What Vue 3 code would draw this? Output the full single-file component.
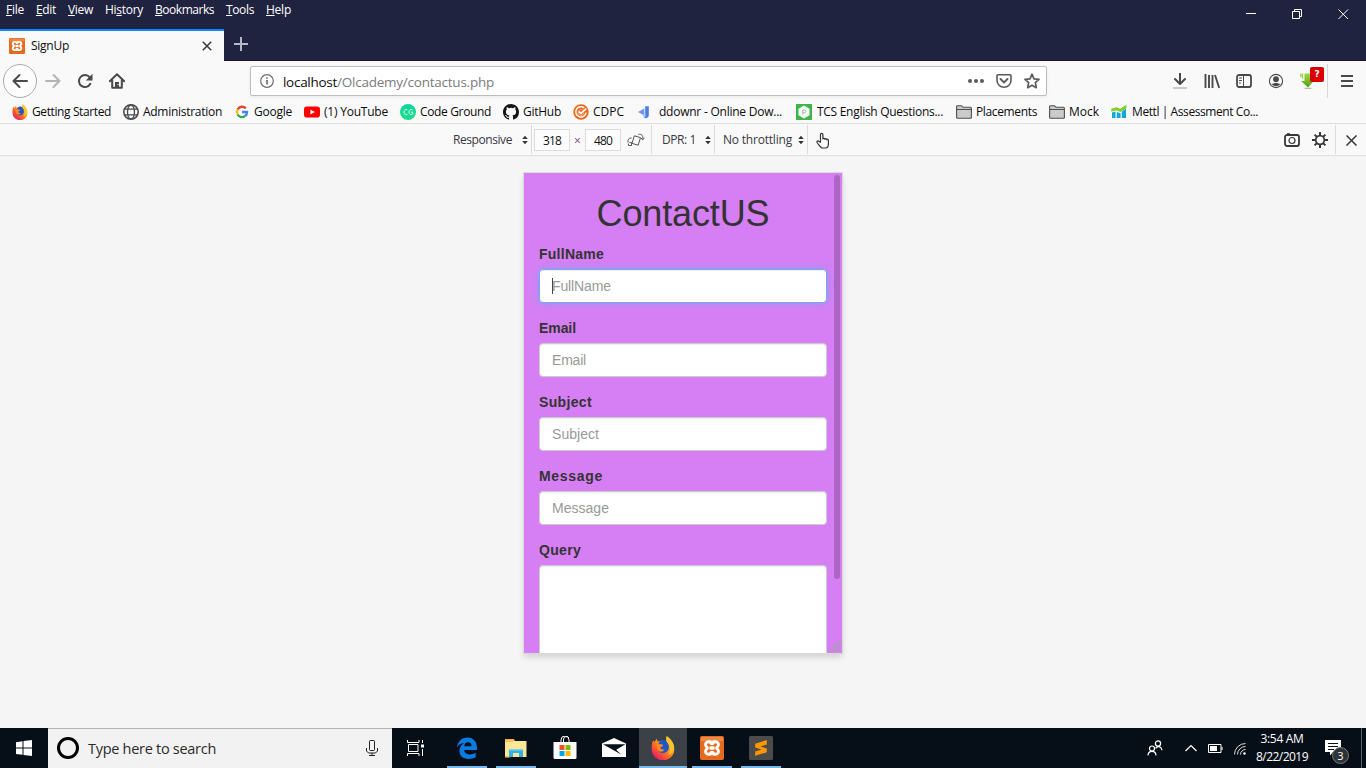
<script setup>
// Tightens or widens letter spacing so that a label takes the given width.
const vFit = {
  mounted(el, { value }) {
    const natural = el.getBoundingClientRect().width
    const n = el.textContent.length
    el.style.letterSpacing = (value - natural) / n + 'px'
  },
}

const menus = [
  ['', 'F', 'ile', 18], ['', 'E', 'dit', 20], ['', 'V', 'iew', 25],
  ['Hi', 's', 'tory', 38], ['', 'B', 'ookmarks', 59], ['', 'T', 'ools', 28], ['', 'H', 'elp', 25],
]
const bookmarks = [
  ['firefox', 'Getting Started', 79], ['globe', 'Administration', 79], ['google', 'Google', 38],
  ['youtube', '(1) YouTube', 64], ['code', 'Code Ground', 71], ['github', 'GitHub', 38],
  ['cdpc', 'CDPC', 31], ['ddownr', 'ddownr - Online Dow...', 123], ['tcs', 'TCS English Questions...', 126],
  ['folder', 'Placements', 61], ['folder', 'Mock', 30], ['mettl', 'Mettl | Assessment Co...', 126],
]
const fields = [['FullName', 65, 59], ['Email', 37, 34], ['Subject', 53, 47], ['Message', 64, 57]]
const apps = ['edge', 'explorer', 'store', 'mail', 'firefox', 'xampp', 'sublime']
const running = ['edge', 'explorer', 'firefox', 'xampp', 'sublime']
</script>

<template>
  <div class="screen">
    <svg class="defs" width="0" height="0" aria-hidden="true">
      <defs>
        <linearGradient id="ffg" x1="1" y1="0" x2="0.2" y2="1">
          <stop offset="0" stop-color="#fff23a" /><stop offset=".4" stop-color="#ffb01c" />
          <stop offset=".7" stop-color="#ff5a28" /><stop offset="1" stop-color="#e0127c" />
        </linearGradient>
        <linearGradient id="cg" x1="0" y1="0" x2="0" y2="1">
          <stop offset="0" stop-color="#12d3a3" /><stop offset="1" stop-color="#1fdd8a" />
        </linearGradient>
        <linearGradient id="arr" x1="0" y1="0" x2="0" y2="1">
          <stop offset="0" stop-color="#a4d842" /><stop offset="1" stop-color="#4f9d0c" />
        </linearGradient>
      </defs>
      <symbol id="firefox" viewBox="0 0 16 16">
        <path fill="url(#ffg)" d="M1.500 2.600 2 4.100 4 1.800 4.300 3.600 7 3.200 10.200 3.600 10.500.2C13.200 2 15.800 5 15.500 9A7.500 7.200 0 0 1 .5 9C.3 6 .8 4 1.500 2.600Z" />
        <path fill="#2156c4" d="M6.500 3C9.300 1.600 12.300 4 11.900 8c-.4 3.200-4.600 4.500-7 2.200 1.500.4 3-.4 3.400-1.300-1.600.1-2.500-.5-2.500-1.400L8 6C7.500 5.400 5.800 5.600 5 5.500 5.200 4.400 5.700 3.500 6.500 3Z" />
        <path fill="#ffc42b" d="M10.500.2C13.200 2 15.300 5 14.800 8.700c-.5 2.300-2 3.600-3.300 4.100 1.500-2 2-6-.6-8.500C10 3.300 9.900 1.500 10.500.2Z" />
        <path fill="#ff8a24" d="M3.800 5.500 7.300 5.900 8.200 6.300 6.200 7.800C6 9 7.400 9.500 9 9c-1 1.900-3.500 1.900-4.700.2Z" />
      </symbol>
      <symbol id="globe" viewBox="0 0 16 16">
        <g fill="none" stroke="#4c4c4e" stroke-width="1.300"><circle cx="8" cy="8" r="7.200" stroke-width="1.600" /><ellipse cx="8" cy="8" rx="3.500" ry="7" /><path d="M1.600 5.200h12.800M1.600 10.800h12.800" /></g>
      </symbol>
      <symbol id="google" viewBox="0 0 16 16">
        <circle cx="8" cy="8" r="8" fill="#fff" />
        <g fill="none" stroke-width="2.400"><path stroke="#ea4335" d="M3.600 5.500A5 5 0 0 1 11.800 4.400" /><path stroke="#fbbc05" d="M3.600 5.500a5 5 0 0 0 0 5" /><path stroke="#34a853" d="M3.600 10.500a5 5 0 0 0 7.700 1.400" /><path stroke="#4285f4" d="M8 8h5a5 5 0 0 1-1.700 3.900" /></g>
      </symbol>
      <symbol id="youtube" viewBox="0 0 16 16"><rect x="0" y="2.400" width="16" height="11.200" rx="2.800" fill="#f00" /><path fill="#fff" d="M6.400 5.400v5.200L10.800 8Z" /></symbol>
      <symbol id="code" viewBox="0 0 16 16"><circle cx="8" cy="8" r="8" fill="url(#cg)" /><path d="M7.500 5.800a2.400 2.600 0 1 0 0 4.500M12.600 5.800a2.400 2.600 0 1 0 .2 4.300V8.200h-1.800" fill="none" stroke="#c6ffe9" /></symbol>
      <symbol id="github" viewBox="0 0 16 16"><path fill="#171515" d="M8 0C3.580 0 0 3.580 0 8c0 3.540 2.290 6.530 5.470 7.590.4.070.55-.17.55-.38v-1.490c-2.010.37-2.530-.49-2.690-.94-.09-.23-.48-.94-.82-1.130-.28-.15-.68-.52-.01-.53.63-.01 1.080.58 1.230.82.72 1.210 1.870.87 2.330.66.07-.52.28-.87.51-1.070-1.780-.2-3.640-.89-3.640-3.950 0-.87.31-1.590.82-2.150-.08-.2-.36-1.020.08-2.120 0 0 .67-.21 2.200.82a7.400 7.400 0 0 1 4 0c1.530-1.040 2.200-.82 2.200-.82.44 1.100.16 1.920.08 2.120.51.56.82 1.270.82 2.150 0 3.070-1.870 3.750-3.650 3.950.29.25.54.73.54 1.480v2.200c0 .21.15.46.55.38A8 8 0 0 0 16 8c0-4.420-3.580-8-8-8Z" /></symbol>
      <symbol id="cdpc" viewBox="0 0 16 16"><circle cx="8" cy="8" r="7.700" fill="#ef6418" /><g fill="none" stroke="#fff"><path d="M11.200 3.800A5.200 5.200 0 1 0 13.100 8.600" stroke-width="1.500" /><path d="M5.800 7.500 8 9.400 13.300 4.600" stroke-width="1.700" /><path d="M9.600 5.900A2.900 2.900 0 1 0 10.800 9" stroke-width=".7" opacity=".7" /></g></symbol>
      <symbol id="ddownr" viewBox="0 0 16 16"><path fill="#527bea" d="M9.200 2.200h3.600v9.200a3 3 0 0 1-5.500 1.400L9.200 12Z" /><path fill="#6e94f4" d="M8.300 4.600v7L2 8Z" /><path fill="#a9c1fa" d="m6 10 4 2-1.500 1.600Z" /></symbol>
      <symbol id="tcs" viewBox="0 0 16 16"><path fill="#3db54a" d="M0 0h16v16H0Z" /><path fill="#fff" d="m8 1.600 5.500 3.200v6.400L8 14.400l-5.500-3.200V4.800Z" /><path fill="none" stroke="#7dca86" d="M6.800 10.500V6h1.600a1.400 1.400 0 0 1 0 2.800H6.800" /></symbol>
      <symbol id="folder" viewBox="0 0 16 16"><path d="M.6 13.400V2.600a.9.900 0 0 1 .9-.9h4l1.500 1.600h7.500a.9.900 0 0 1 .9.900v9.200a.9.900 0 0 1-.9.900h-13a.9.900 0 0 1-.9-.9Z" fill="#cbcbcb" stroke="#4e4e50" stroke-width="1.100" /><path d="M1 5.500h14" stroke="#4e4e50" /></symbol>
      <symbol id="mettl" viewBox="0 0 16 16"><path fill="#13a7d8" d="M1 8.600 4.500 7.500V14H1Zm4.800-.6 3.800 1.200V14H5.800Zm5-.4L15 4.500V14h-4.200Z" /><path fill="#84cc2c" d="M.3 4.800 5.400 3.200l3.800 1.500L15.400.8v3.500L9.400 7.900 5.200 6.200.3 7.800Z" /></symbol>
      <symbol id="xampp" viewBox="0 0 24 24"><rect width="24" height="24" rx="2" fill="#e56a1c" /><path d="M1 1h22v4H1Z" fill="#f49c60" opacity=".6" /><g fill="none" stroke="#fff" stroke-width="2.900" stroke-linejoin="round"><path d="M8.200 5.800h2.300c.3 2.600 2.700 2.600 3 0h2.300a2.700 2.700 0 0 1 2.600 3.300c-.4 1.700-1.800 2-1.800 2.900s1.400 1.200 1.800 2.900a2.700 2.700 0 0 1-2.600 3.300h-2.300c-.3-2.600-2.700-2.600-3 0H8.200a2.700 2.700 0 0 1-2.600-3.300C6 13.200 7.400 12.900 7.400 12S6 10.800 5.600 9.100a2.700 2.700 0 0 1 2.600-3.300Z" /><path d="M9.500 12h5" stroke-width="3.400" /></g></symbol>
      <symbol id="edge" viewBox="0 0 24 24"><path fill="#0a7be0" d="M2 11.400C2.700 5.600 6.700 1.500 12.200 1.500 18.500 1.500 22 6 22 12v2.100H9.100c.2 3 2.400 4.300 5.400 4.300 2.400 0 4.500-.6 6.200-1.700v4.500c-2 1.100-4.500 1.700-7.300 1.700-5.400 0-9-3.200-9-8.200 0-3.500 1.900-6.200 4.900-7.500C5.600 7.300 3.500 8.700 2 11.400Zm7.300-1.100h7.200c.2-2.400-1.200-4-3.500-4s-3.500 1.500-3.700 4Z" /></symbol>
      <symbol id="explorer" viewBox="0 0 24 24"><path fill="#e9b44b" d="M1 3h9l1 2H1Z" /><path fill="#ffe695" d="M1 5h21.500v16H1Z" /><path fill="#f5c752" d="M1 4h8v2H1ZM1 20h5v1.500H1Z" /><path fill="#31b0e7" d="M5 13h14v8h-4v-4H9v4H5Z" /><path fill="#7cd2f4" d="M5 13h14v1.500H5Z" /></symbol>
      <symbol id="store" viewBox="0 0 24 24"><path fill="#fff" d="M.5 6h23v15.500a1.500 1.500 0 0 1-1.500 1.500H2A1.500 1.500 0 0 1 .5 21.500Z" /><path d="M8 7V4a4 4 0 0 1 8 0v3M10.500 6V3a3 3 0 0 1 5.500-1" fill="none" stroke="#fff" /><path fill="#f25022" d="M6.500 9h5v5h-5Z" /><path fill="#7fba00" d="M12.500 9h5v5h-5Z" /><path fill="#00a4ef" d="M6.500 15h5v5h-5Z" /><path fill="#ffb900" d="M12.500 15h5v5h-5Z" /></symbol>
      <symbol id="mail" viewBox="0 0 24 24"><path fill="#fff" d="M0 7.500 12 2l12 5.500V21H0Z" /><path fill="#07101a" d="M1 8.300h22.500l-9.300 5.500 5 4.700L1 8.300Z" /></symbol>
      <symbol id="sublime" viewBox="0 0 24 24"><rect width="24" height="24" rx="1.500" fill="#4b4b4b" /><path fill="#ff9800" d="M17.800 4v4.400l-6.300 2 6.300 2v3.800L6.200 19.800v-4.300l6.300-2-6.300-2V7.700Z" /></symbol>
      <symbol id="updown" viewBox="0 0 6 10"><path fill="#333" d="M3 .8 5.800 4H.2ZM3 9.200.2 6h5.600Z" /></symbol>
    </svg>

    <header class="titlebar">
      <div class="toprow">
        <nav class="menus">
          <span v-for="m in menus" :key="m[1]" v-fit="m[3]" class="t">{{ m[0] }}<u>{{ m[1] }}</u>{{ m[2] }}</span>
        </nav>
        <svg class="wincontrols" width="138" height="29" viewBox="0 0 138 29" fill="none" stroke="#fff"><path d="M18 13.500h10M64.500 11.500h7v7h-7ZM66.500 11.500v-2h7v7h-2M110.500 9.500l9.500 9.500m0-9.500-9.500 9.500" /></svg>
      </div>
      <div class="tabs">
        <div class="tab">
          <svg width="16" height="16"><use href="#xampp" /></svg>
          <span v-fit="38" class="t">SignUp</span>
          <svg class="close" width="10" height="10" viewBox="0 0 10 10"><path d="m.8.8 8.400 8.400m0-8.400L.8 9.200" stroke="#3c3c3e" stroke-width="1.600" /></svg>
        </div>
        <svg class="plus" width="14" height="14" viewBox="0 0 14 14"><path d="M7 0v14M0 7h14" stroke="#b7b8c6" stroke-width="2" /></svg>
      </div>
    </header>

    <div class="toolbar">
      <div class="navbtns">
        <div class="back"><svg width="16" height="16" viewBox="0 0 16 16"><path d="M15 8H1.500M7.500 2l-6 6 6 6" class="s2" /></svg></div>
        <svg width="16" height="16" viewBox="0 0 16 16"><path d="M1 8h13.500M8.500 2l6 6-6 6" class="s2 dim" /></svg>
        <svg width="16" height="16" viewBox="0 0 16 16"><path d="M12.700 4.300A6 6 0 1 0 13.300 10.800" class="s2" /><path d="M15.500.8v6.700H8.800Z" fill="#4a4a4c" /></svg>
        <svg width="16" height="16" viewBox="0 0 16 16"><path d="m.8 8.200 7.200-7 7.200 7M3.200 7.500v7.300h9.600V7.500" class="s2" /><path d="M6 9h4v6H6Z" fill="#4a4a4c" /><path d="M8.500 11.500h1" stroke="#fff" /></svg>
      </div>
      <div class="urlbar">
        <svg width="14" height="14" viewBox="0 0 14 14"><circle cx="7" cy="7" r="6.300" fill="none" stroke="#6e6e70" stroke-width="1.200" /><path d="M7 6v4.500M7 3.200v1.600" stroke="#6e6e70" stroke-width="1.700" /></svg>
        <div class="url"><span v-fit="54" class="t">localhost</span><span v-fit="157" class="t path">/Olcademy/contactus.php</span></div>
        <div class="urlicons">
          <svg width="18" height="16" viewBox="0 0 18 16" fill="#5b5b5d"><circle cx="3" cy="8" r="2" /><circle cx="9" cy="8" r="2" /><circle cx="15" cy="8" r="2" /></svg>
          <svg width="16" height="16" viewBox="0 0 16 16"><path d="M1 2.800a1 1 0 0 1 1-1h12a1 1 0 0 1 1 1v4.500a7 7 0 0 1-14 0Z" fill="none" stroke="#5b5b5d" stroke-width="1.600" /><path d="m4.500 6 3.500 3.500L11.500 6" fill="none" stroke="#5b5b5d" stroke-width="1.900" stroke-linecap="round" /></svg>
          <svg width="16" height="16" viewBox="0 0 16 16"><path d="m8 1.200 2 4.600 5 .5-3.700 3.400 1 5L8 12.200l-4.300 2.500 1-5L1 6.300l5-.5Z" fill="none" stroke="#5b5b5d" stroke-width="1.700" stroke-linejoin="round" /></svg>
        </div>
      </div>
      <div class="actions">
        <svg viewBox="0 0 16 16"><path d="M8 0v10.500M3 6l5 5 5-5" class="s2" /><path d="M1 15h14" stroke="#c4c4c6" stroke-width="1.800" /></svg>
        <svg viewBox="0 0 16 16"><path d="M1.500 1v14M5 2v13M8.500 2v13M11 2l4.200 13" stroke="#4a4a4c" stroke-width="1.900" fill="none" /></svg>
        <svg viewBox="0 0 16 16"><rect x="1" y="2" width="14" height="12" rx="2" fill="none" stroke="#4a4a4c" stroke-width="1.800" /><path d="M7.500 2v12M3 5h3M3 7.500h3M3 10h2" stroke="#4a4a4c" /></svg>
        <svg viewBox="0 0 16 16"><circle cx="8" cy="8" r="6.600" fill="none" stroke="#4a4a4c" stroke-width="1.100" /><circle cx="8" cy="6.200" r="2.900" fill="#4a4a4c" /><path d="M3.500 10.700c2 .7 2.500-1 4.500-1s2.500 1.700 4.500 1c-1.500 3.300-7.500 3.300-9 0Z" fill="#4a4a4c" /></svg>
        <div class="dl">
          <svg viewBox="0 0 16 16"><path fill="url(#arr)" d="M4.500.5h7v6H15L8 14.500 1 8h3.500Z" /><path d="M2.500.5v5M.8.500V4" stroke="#8dce36" stroke-width="1.200" /><path d="M4.500 15.300h7" stroke="#aaa" /></svg>
          <b class="badge">?</b>
        </div>
      </div>
      <div class="burger"><svg width="12" height="14" viewBox="0 0 12 14"><path d="M0 2h12M0 7h12M0 12h12" stroke="#4a4a4c" stroke-width="2" /></svg></div>
    </div>

    <div class="bookmarks">
      <div v-for="b in bookmarks" :key="b[1]" class="bm" :class="b[0]">
        <svg width="16" height="16"><use :href="'#' + b[0]" /></svg><span v-fit="b[2]" class="t">{{ b[1] }}</span>
      </div>
    </div>

    <div class="device">
      <div class="devleft">
        <div class="cell"><span v-fit="59" class="t">Responsive</span><svg width="6" height="10"><use href="#updown" /></svg></div>
        <div class="cell dims">
          <span class="num"><span v-fit="18" class="t">318</span></span><span class="times">×</span><span class="num"><span v-fit="18" class="t">480</span></span>
          <svg class="rotate" width="18" height="14" viewBox="0 0 18 14" fill="none" stroke="#56565a"><path d="m7.300 2.800 6.200 1.800-2.300 7.600L5 10.400ZM11.500 1.500c2.500-1 5 .8 4.300 5M14 5l1.700 1.800L17.500 5M4.500 5C1.500 4.600.600 7.200 1 9.500M2.500 9.500h2v3h-3v-2" /></svg>
        </div>
        <div class="cell"><span v-fit="34" class="t">DPR: 1</span><svg width="6" height="10"><use href="#updown" /></svg></div>
        <div class="cell"><span v-fit="69" class="t">No throttling</span><svg width="6" height="10"><use href="#updown" /></svg></div>
        <svg class="hand" width="14" height="17" viewBox="0 0 14 16"><path d="M4.500 9.800V2a1.200 1.200 0 0 1 2.400 0v4.500c0-1 2-1 2 .3 0-1 1.800-1 1.800.4 0-.8 1.700-.6 1.700.7v3.600c0 2.500-1 4-3 4H6.500c-1.500 0-2-1-5.500-5.500C.6 8.600 2.200 8 3 9Z" fill="#fff" stroke="#353538" stroke-width="1.200" stroke-linejoin="round" /></svg>
      </div>
      <div class="devright">
        <svg width="16" height="16" viewBox="0 0 16 16" fill="none" stroke="#38383b"><rect x="1" y="3" width="14" height="11" rx="2" stroke-width="1.800" /><circle cx="8" cy="8.500" r="3" stroke-width="1.200" /><path d="M3 2h3" stroke-width="1.600" /></svg>
        <svg width="16" height="16" viewBox="0 0 16 16" fill="none" stroke="#38383b"><circle cx="8" cy="8" r="4.300" stroke-width="1.700" /><path stroke-width="2" d="M8 0v3.500M8 12.500V16M0 8h3.500M12.500 8H16M2.600 2.600l2.300 2.300M11.100 11.100l2.300 2.300M2.600 13.400l2.300-2.300M11.100 4.900l2.300-2.300" /></svg>
        <div class="devclose"><svg width="11" height="11" viewBox="0 0 11 11"><path d="m.5.5 10 10m0-10-10 10" stroke="#38383b" stroke-width="1.500" /></svg></div>
      </div>
    </div>

    <main class="stage">
      <div class="phone">
        <h1><span v-fit="173" class="t">ContactUS</span></h1>
        <div v-for="(f, i) in fields" :key="f[0]" class="group">
          <label><span v-fit="f[1]" class="t">{{ f[0] }}</span></label>
          <div class="input" :class="{ focus: i === 0 }"><i v-if="i === 0" class="caret"></i><span v-fit="f[2]" class="t">{{ f[0] }}</span></div>
        </div>
        <div class="group"><label><span v-fit="42" class="t">Query</span></label><div class="input area"></div></div>
        <div class="scroll"></div>
        <svg class="grip" width="12" height="12" viewBox="0 0 12 12"><path d="M0 12 12 0M4 12l8-8M8 12l4-4" stroke="#aa9daf" stroke-width="1.300" /></svg>
      </div>
    </main>

    <footer class="taskbar">
      <div class="start"><svg width="16" height="16" viewBox="0 0 16 16" fill="#fff"><path d="M0 2.200 6.500 1.200v6.300H0ZM7.500 1.100 16 0v7.500H7.500ZM0 8.500h6.500v6.300L0 13.900ZM7.500 8.500H16V16l-8.500-1.100Z" /></svg></div>
      <div class="search">
        <i class="cortana"></i><span v-fit="128" class="t">Type here to search</span>
        <svg width="12" height="16" viewBox="0 0 12 16" fill="none" stroke="#222"><rect x="3.500" y=".5" width="5" height="10" rx=".8" /><path d="M.5 8v3l2 2h7l2-2V8M6 13v2.500M3 15.500h6" /></svg>
      </div>
      <div class="taskview"><svg width="18" height="16" viewBox="0 0 18 16" fill="none" stroke="#fff"><path d="M1.500 4.500h9.500v7H1.500ZM.5 0v2.500H12V0M.5 16v-2.500H12V16M15.500 0v3M15.500 9v7" /><path d="M14 4.500h3v3h-3Z" fill="#fff" stroke="none" /></svg></div>
      <div class="apps">
        <div v-for="a in apps" :key="a" class="app" :class="[a, { running: running.includes(a) }]"><svg width="24" height="24"><use :href="'#' + a" /></svg></div>
      </div>
      <div class="tray">
        <svg width="16" height="16" viewBox="0 0 16 16" fill="none" stroke="#fff" stroke-width="1.200"><circle cx="5" cy="8.500" r="2.500" /><path d="M1 15.500c0-5.500 8-5.500 8 0" /><circle cx="11" cy="3.500" r="2.600" /><path d="M8.500 8.300c2-3 6-2 6.500 2" /></svg>
        <svg width="12" height="8" viewBox="0 0 12 8" fill="none" stroke="#fff" stroke-width="1.200"><path d="m.5 7 5.500-5.500L11.500 7" /></svg>
        <svg width="15" height="9" viewBox="0 0 15 9"><path d="M.5.500h12.500v8H.5ZM14 3v3" fill="none" stroke="#fff" /><path d="M2 2h7v5H2Z" fill="#fff" /></svg>
        <svg width="12" height="12" viewBox="0 0 12 12" fill="none" stroke="#d9dcde"><path d="M.5 11.500a11 11 0 0 1 11-11M3.500 11.500a8 8 0 0 1 8-8M6.500 11.500a5 5 0 0 1 5-5" /><circle cx="10.500" cy="10.500" r="1.200" fill="#fff" stroke="none" /></svg>
        <div class="clock"><span v-fit="43" class="t">3:54 AM</span><span v-fit="52" class="t">8/22/2019</span></div>
        <div class="notes"><svg width="16" height="16" viewBox="0 0 16 16"><path d="M0 0h16v12H8l-3 3.500V12H0Z" fill="#fff" /><path d="M3 3.500h10M3 6.500h10M3 9.500h6" stroke="#08111b" /></svg><span class="count">3</span></div>
        <i class="show"></i>
      </div>
    </footer>
  </div>
</template>

<style>
html, body { margin: 0; overflow: hidden; }
</style>

<style scoped>
.screen { width: 1366px; height: 768px; display: flex; flex-direction: column; background: #f5f5f5; font: 12px/16px "Open Sans", "Noto Sans", sans-serif; color: #0c0c0d; overflow: hidden; }
.screen * { box-sizing: border-box; }
svg { display: block; flex: none; }
.defs { position: absolute; }
.t { display: inline-block; white-space: nowrap; flex: none; }
.s2 { fill: none; stroke: #4a4a4c; stroke-width: 2; stroke-linecap: round; stroke-linejoin: round; }
.dim { stroke: #b4b4b6; }

.titlebar { height: 61px; flex: none; background: #202340; color: #fff; border-bottom: 1px solid #14162c; }
.toprow { display: flex; justify-content: space-between; height: 29px; }
.menus { display: flex; gap: 12px; padding: 2px 0 0 6px; }
.menus u { text-underline-offset: 1px; text-decoration-thickness: 1px; }
.tabs { display: flex; align-items: center; height: 32px; }
.tab { width: 224px; height: 32px; background: #f9f9fa; border-top: 2px solid #0a84ff; display: flex; align-items: center; padding: 0 12px 0 9px; gap: 6px; color: #0c0c0d; }
.close { margin-left: auto; }
.plus { margin: -3px 0 0 10px; }

.toolbar { height: 40px; flex: none; display: flex; align-items: center; background: #f9f9fa; }
.navbtns { display: flex; align-items: center; width: 250px; padding-left: 3px; gap: 16px; }
.back { width: 34px; height: 34px; border: 1px solid #aaa; border-radius: 50%; background: #fdfdfd; display: grid; place-items: center; margin-right: -8px; }
.urlbar { width: 797px; height: 30px; border: 1px solid #bdbdbd; border-radius: 2px; background: #fff; display: flex; align-items: center; padding: 0 6px 0 9px; gap: 9px; box-shadow: 0 1px 3px #0001; }
.url { display: flex; font-size: 13.500px; line-height: 18px; padding-top: 2px; }
.path { color: #7b7b7d; }
.urlicons { display: flex; gap: 12px; margin-left: auto; }
.urlicons svg:first-child { margin-right: -1px; }
.actions { display: flex; align-items: center; gap: 16px; margin-left: 125px; }
.actions svg { width: 16px; height: 16px; }
.dl { position: relative; }
.badge { position: absolute; left: 10px; top: -6px; width: 14px; height: 15px; border-radius: 2px; background: #d90000; color: #fff; font: bold 9px/15px "DejaVu Sans", sans-serif; text-align: center; }
.burger { display: flex; align-items: center; justify-content: center; height: 34px; width: 39px; margin-left: 11px; border-left: 1px solid #d7d7db; }

.bookmarks { height: 23px; flex: none; background: #f9f9fa; border-bottom: 1px solid #dedee0; display: grid; grid-template-columns: 111px 111px 70px 96px 103px 70px 63px 160px 160px 93px 62px 200px; padding-left: 12px; align-items: center; }
.bm { display: flex; align-items: center; gap: 4px; margin-top: -1px; }
.bm.ddownr { gap: 7px; }
.bm.tcs, .bm.mettl { gap: 5px; }

.device { height: 32px; flex: none; background: #f9f9fa; border-bottom: 1px solid #dedee0; display: flex; justify-content: space-between; padding-left: 453px; color: #38383d; }
.devleft { display: flex; align-items: center; }
.cell { height: 29px; display: flex; align-items: center; justify-content: space-between; border-right: 1px solid #dcdcde; padding-right: 3px; }
.cell:nth-child(1) { width: 79px; }
.cell:nth-child(2) { width: 120px; padding: 0 6px 0 2px; }
.cell:nth-child(3) { width: 63px; padding-left: 10px; }
.cell:nth-child(4) { width: 93px; padding-left: 8px; }
.num { width: 36px; height: 22px; border: 1px solid #dcdcde; background: #fdfdfd; color: #111; text-align: center; line-height: 21px; }
.times { color: #79427e; width: 15px; text-align: center; padding-top: 2px; }
.rotate { margin-left: 6px; }
.hand { margin-left: 8px; margin-top: 1px; }
.devright { display: flex; align-items: center; gap: 12px; }
.devclose { margin-left: -5px; width: 31px; height: 29px; border-left: 1px solid #dcdcde; display: grid; place-items: center; padding-top: 2px; }

.stage { height: 572px; flex: none; padding-top: 17px; }
.phone { position: relative; width: 318px; height: 480px; margin: 0 auto; overflow: hidden; padding: 21px 15px 0; background: #d67ff5; font: 14px/20px "Liberation Sans", Arial, sans-serif; color: #333; box-shadow: 0 0 0 1px #dadadc, 0 4px 6px rgba(0, 0, 0, .15); }
h1 { margin: 0 0 10px; font-size: 36px; line-height: 40px; font-weight: 400; text-align: center; }
.group { margin-bottom: 15px; }
label { display: block; font-weight: 700; height: 20px; margin-bottom: 5px; }
.input { height: 34px; border: 1px solid #ccc; border-radius: 4px; background: #fff; color: #999; padding: 6px 12px; box-shadow: inset 0 1px 1px rgba(0, 0, 0, .075); display: flex; }
.focus { border-color: #66afe9; box-shadow: inset 0 1px 1px rgba(0, 0, 0, .075), 0 0 8px rgba(102, 175, 233, .6); }
.caret { width: 1px; height: 16px; background: #444; margin: 2px -1px 0 0; }
.area { height: 130px; }
.scroll { position: absolute; right: 2px; top: 2px; width: 6px; height: 404px; border-radius: 3px; background: #ab66c4; }
.grip { position: absolute; right: 1px; bottom: 1px; }

.taskbar { height: 40px; flex: none; background: #060e18; display: flex; color: #fff; }
.start, .taskview { width: 48px; display: grid; place-items: center; }
.search { width: 344px; background: #f2f2f2; border-top: 1px solid #b4b4b4; display: flex; align-items: center; padding: 0 14px 0 9px; color: #2b2b2b; font-size: 14.500px; }
.search svg { margin-left: auto; margin-top: -2px; }
.cortana { width: 22px; height: 22px; border: 3px solid #000; border-radius: 50%; margin: -1px 9px 0 0; }
.apps { display: flex; gap: 1px; margin-left: 3px; }
.app { width: 48px; height: 40px; display: grid; place-items: center; position: relative; }
.app.running::after { content: ""; position: absolute; left: 4px; right: 4px; bottom: 0; height: 2px; background: #76b9ed; }
.app.firefox { background: #3c4148; }
.app.firefox::after { left: 0; right: 0; }
.tray { margin-left: auto; display: flex; align-items: center; }
.tray > svg:nth-child(1) { margin-right: 22px; }
.tray > svg:nth-child(2) { margin-right: 11px; }
.tray > svg:nth-child(3) { margin-right: 11px; }
.tray > svg:nth-child(4) { margin-top: 2px; }
.clock { width: 54px; margin: 0 16px 0 9px; display: flex; flex-direction: column; align-items: center; line-height: 18px; }
.notes { position: relative; margin-right: 20px; }
.count { position: absolute; left: 7px; top: 7px; width: 17px; height: 17px; border-radius: 50%; background: #2e3338; border: 1px solid #7a7d80; text-align: center; line-height: 15px; font-size: 11px; }
.show { width: 1px; height: 40px; background: #5b6168; margin: 0 4px 0 -8px; transform: none; }
.notes { margin-right: 28px; }
.clock + .notes { margin-left: 0; }
</style>
